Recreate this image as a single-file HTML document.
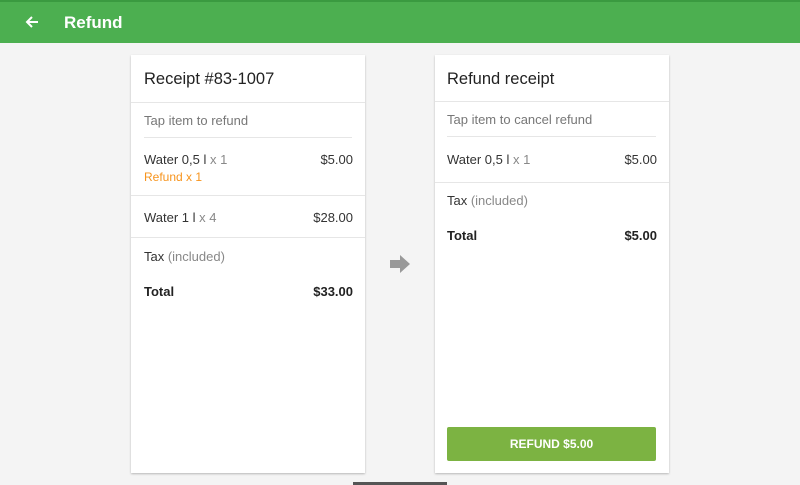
<html><head><style>
body{margin:0;width:800px;height:485px;background:#f4f4f4;font-family:"Liberation Sans",sans-serif;position:relative;overflow:hidden}
.a{position:absolute}
.bar{left:0;top:0;width:800px;height:43px;background:#4caf50;border-top:2px solid #3a9a40;box-sizing:border-box}
.card{background:#fff;box-shadow:0 1px 2px rgba(0,0,0,.25);top:55px;height:418px;width:234px}
.t{font-size:16px;color:#222}
.s{font-size:13px;color:#777}
.i{font-size:13px;color:#333}
.g{color:#888}
.hr{height:1px;background:#e6e6e6}
.b{font-weight:bold;font-size:13px;color:#222}
</style></head><body>
<div class="a bar"></div>
<svg class="a" style="left:25px;top:15px" width="14" height="14" viewBox="0 0 14 14"><path d="M13 7H2M7 2L2 7l5 5" stroke="#fff" stroke-width="2" fill="none"/></svg>
<div class="a" style="left:64px;top:13px;color:#fff;font-size:17px;font-weight:bold">Refund</div>

<div class="a card" style="left:131px">
<div class="a t" style="left:13px;top:15px;font-size:16.5px">Receipt #83-1007</div>
<div class="a hr" style="left:0;top:47px;width:234px"></div>
<div class="a s" style="left:13px;top:58px">Tap item to refund</div>
<div class="a hr" style="left:13px;top:82px;width:208px"></div>
<div class="a i" style="left:13px;top:97px">Water 0,5 l <span class="g">x 1</span></div>
<div class="a i" style="right:12px;top:97px">$5.00</div>
<div class="a" style="left:13px;top:115px;font-size:12px;color:#f7941d">Refund x 1</div>
<div class="a hr" style="left:0;top:140px;width:234px"></div>
<div class="a i" style="left:13px;top:155px">Water 1 l <span class="g">x 4</span></div>
<div class="a i" style="right:12px;top:155px">$28.00</div>
<div class="a hr" style="left:0;top:182px;width:234px"></div>
<div class="a i" style="left:13px;top:194px">Tax <span class="g">(included)</span></div>
<div class="a b" style="left:13px;top:229px">Total</div>
<div class="a b" style="right:12px;top:229px">$33.00</div>
</div>

<svg class="a" style="left:390px;top:255px" width="20" height="18" viewBox="0 0 20 18"><path d="M0 5h10V0l10 9-10 9v-5H0z" fill="#999"/></svg>

<div class="a card" style="left:435px">
<div class="a t" style="left:12px;top:15px;font-size:16.5px">Refund receipt</div>
<div class="a hr" style="left:0;top:46px;width:234px"></div>
<div class="a s" style="left:12px;top:57px">Tap item to cancel refund</div>
<div class="a hr" style="left:12px;top:81px;width:209px"></div>
<div class="a i" style="left:12px;top:97px">Water 0,5 l <span class="g">x 1</span></div>
<div class="a i" style="right:12px;top:97px">$5.00</div>
<div class="a hr" style="left:0;top:127px;width:234px"></div>
<div class="a i" style="left:12px;top:138px">Tax <span class="g">(included)</span></div>
<div class="a b" style="left:12px;top:173px">Total</div>
<div class="a b" style="right:12px;top:173px">$5.00</div>
<div class="a" style="left:12px;top:372px;width:209px;height:34px;background:#7cb342;border-radius:2px;color:#fff;font-size:12px;font-weight:bold;text-align:center;line-height:34px">REFUND $5.00</div>
</div>
<div class="a" style="left:353px;top:482px;width:94px;height:3px;background:#555"></div>
</body></html>
